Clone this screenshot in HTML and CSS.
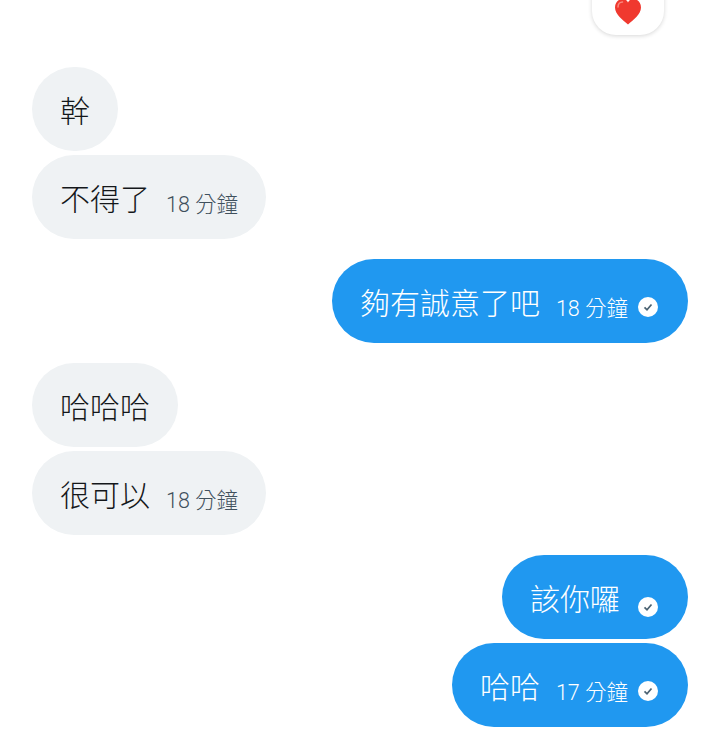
FILE: index.html
```html
<!DOCTYPE html>
<html lang="zh-Hant">
<head>
    <meta charset="UTF-8">
    <meta name="viewport" content="width=device-width, initial-scale=1.0">
    <title>Messages</title>
    <link rel="stylesheet" href="styles.css">
</head>
<body>
    <div class="chat">
        <div class="reaction-row">
            <div class="reaction">
                <svg class="heart" viewBox="0 0 28 26" width="28" height="26">
                    <path d="M14 25.500C9 21 1 15.500 1 8.500 1 3.500 4.500 0 8.500 0 11 0 13 1.300 14 3.500 15 1.300 17 0 19.500 0 23.500 0 27 3.500 27 8.500 27 15.500 19 21 14 25.500Z" fill="#f0392f"/>
                    <path d="M4 8C4 5 6 3 8.500 3" fill="none" stroke="#f98a80" stroke-width="1.500" stroke-linecap="round"/>
                </svg>
            </div>
        </div>

        <div class="group">
            <div class="bubble in"><span class="text">幹</span></div>
            <div class="bubble in"><span class="text">不得了</span><span class="time">18 分鐘</span></div>
        </div>

        <div class="group">
            <div class="bubble out">
                <span class="text">夠有誠意了吧</span><span class="time">18 分鐘</span>
                <svg class="check" viewBox="0 0 20 20" width="20" height="20"><circle cx="10" cy="10" r="10" fill="#fff"/><path d="M6.500 10.300 9 12.800 13.500 7.500" fill="none" stroke="#4b6272" stroke-width="1.700"/></svg>
            </div>
        </div>

        <div class="group">
            <div class="bubble in"><span class="text">哈哈哈</span></div>
            <div class="bubble in"><span class="text">很可以</span><span class="time">18 分鐘</span></div>
        </div>

        <div class="group">
            <div class="bubble out">
                <span class="text">該你囉</span>
                <svg class="check" viewBox="0 0 20 20" width="20" height="20"><circle cx="10" cy="10" r="10" fill="#fff"/><path d="M6.500 10.300 9 12.800 13.500 7.500" fill="none" stroke="#4b6272" stroke-width="1.700"/></svg>
            </div>
            <div class="bubble out">
                <span class="text">哈哈</span><span class="time">17 分鐘</span>
                <svg class="check" viewBox="0 0 20 20" width="20" height="20"><circle cx="10" cy="10" r="10" fill="#fff"/><path d="M6.500 10.300 9 12.800 13.500 7.500" fill="none" stroke="#4b6272" stroke-width="1.700"/></svg>
            </div>
        </div>
    </div>
</body>
</html>
```

FILE: styles.css
```css
html, body {
    margin: 0;
    height: 739px;
    overflow: hidden;
    background-color: #fff;
}

.chat {
    display: flex;
    flex-direction: column;
    gap: 20px;
    padding: 0 32px;
    font-family: Roboto, "Noto Sans CJK TC", sans-serif;
}

.reaction-row {
    display: flex;
    justify-content: flex-end;
    height: 47px;
    padding-right: 24px;
}

.reaction {
    display: flex;
    justify-content: center;
    width: 72px;
    height: 47px;
    margin-top: -12px;
    border-radius: 0 0 24px 24px;
    background-color: #fff;
    box-shadow: 0 1px 4px rgba(0, 0, 0, 0.16);
}

.heart {
    margin-top: 11px;
}

.group {
    display: flex;
    flex-direction: column;
    gap: 4px;
}

.bubble {
    display: flex;
    align-items: flex-start;
    box-sizing: border-box;
    height: 84px;
    padding: 25px 28px 0;
    border-radius: 42px;
}

.in {
    align-self: flex-start;
    background-color: #eff2f4;
    color: #14171a;
}

.out {
    align-self: flex-end;
    padding-right: 30px;
    background-color: #2098f0;
    color: #fff;
}

.text {
    font-size: 30px;
    font-weight: 300;
    line-height: 40px;
}

.time {
    margin-top: 5px;
    margin-left: 16px;
    font-size: 21.500px;
    font-weight: 300;
    line-height: 40px;
    color: #3f505c;
}

.out .time {
    color: #fff;
}

.check {
    align-self: center;
    margin-left: 10px;
    margin-bottom: 13px;
}

.out > .text + .check {
    margin-left: 18px;
    margin-bottom: 5px;
}
```
